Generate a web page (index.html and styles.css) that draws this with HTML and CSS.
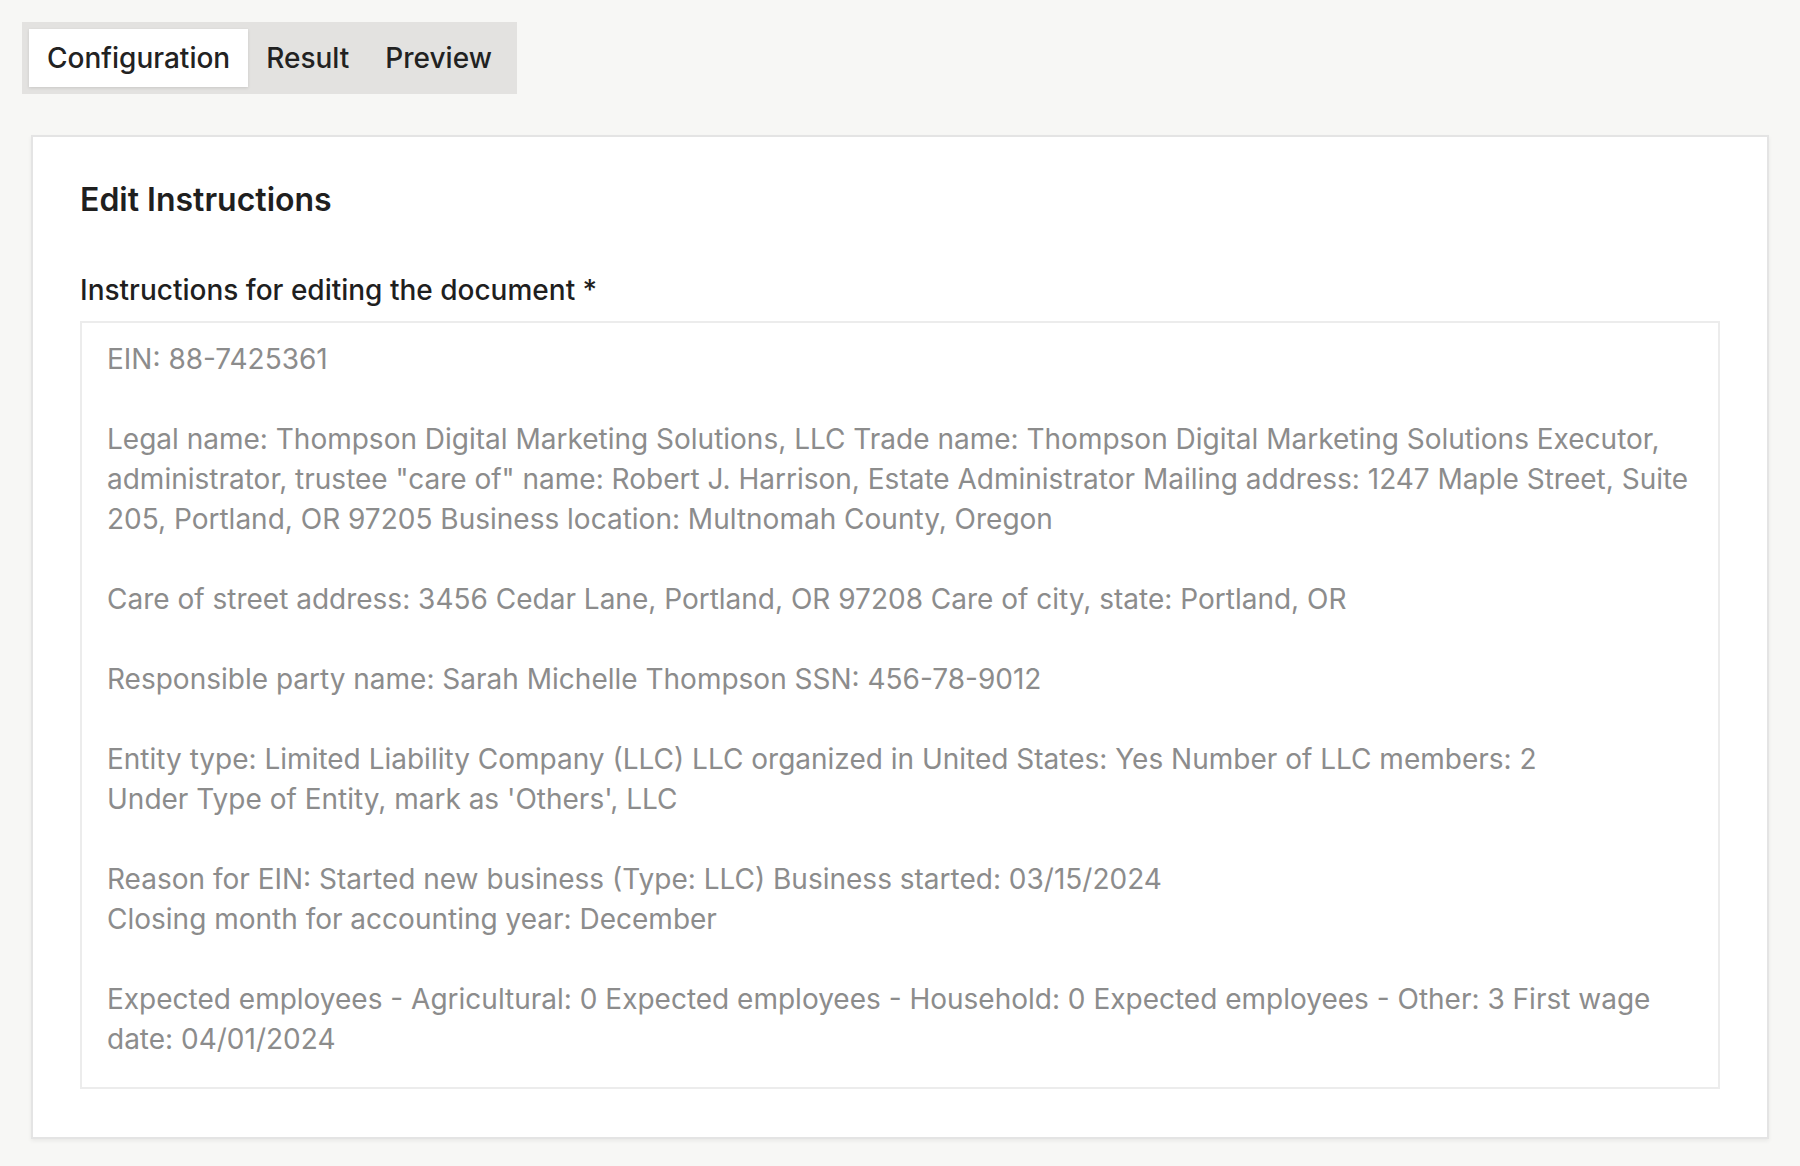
FILE: index.html
```html
<!DOCTYPE html>
<html lang="en">
<head>
<meta charset="utf-8">
<title>Edit Instructions</title>
<link rel="stylesheet" href="styles.css">
</head>
<body>
<div class="page">
  <div class="tabs">
    <button class="tab active">Configuration</button>
    <button class="tab">Result</button>
    <button class="tab">Preview</button>
  </div>
  <section class="card">
    <h2 class="title">Edit Instructions</h2>
    <label class="label" for="instr">Instructions for editing the document *</label>
    <textarea id="instr" class="input">EIN: 88-7425361

Legal name: Thompson Digital Marketing Solutions, LLC Trade name: Thompson Digital Marketing Solutions Executor, administrator, trustee "care of" name: Robert J. Harrison, Estate Administrator Mailing address: 1247 Maple Street, Suite 205, Portland, OR 97205 Business location: Multnomah County, Oregon

Care of street address: 3456 Cedar Lane, Portland, OR 97208 Care of city, state: Portland, OR

Responsible party name: Sarah Michelle Thompson SSN: 456-78-9012

Entity type: Limited Liability Company (LLC) LLC organized in United States: Yes Number of LLC members: 2
Under Type of Entity, mark as 'Others', LLC

Reason for EIN: Started new business (Type: LLC) Business started: 03/15/2024
Closing month for accounting year: December

Expected employees - Agricultural: 0 Expected employees - Household: 0 Expected employees - Other: 3 First wage date: 04/01/2024</textarea>
  </section>
</div>
</body>
</html>
```

FILE: styles.css
```css
* { box-sizing: border-box; }
html, body {
  margin: 0;
  padding: 0;
  background: #f7f7f5;
  font-family: Inter, "Noto Sans", "Liberation Sans", sans-serif;
  color: #1f1f1f;
}
.page {
  padding: 22px;
}
.tabs {
  display: inline-flex;
  background: #e3e2e0;
  padding: 7px;
  gap: 0;
}
.tab {
  font-family: inherit;
  font-size: 28px;
  font-weight: 500;
  color: #222;
  background: transparent;
  border: none;
  height: 58px;
  padding: 0 18px;
  cursor: pointer;
}
.tab.active {
  background: #ffffff;
  box-shadow: 0 1px 3px rgba(0,0,0,0.12);
}
.card {
  margin: 41px 9px 0;
  background: #fff;
  border: 2px solid #e4e4e4;
  box-shadow: 0 2px 4px rgba(0,0,0,0.06);
  padding: 43px 47px 48px;
  display: flex;
  flex-direction: column;
}
.title {
  margin: 0 0 53px;
  font-size: 32px;
  font-weight: 600;
  line-height: 40px;
  color: #1f1f1f;
}
.label {
  font-size: 28px;
  font-weight: 500;
  line-height: 34px;
  margin-bottom: 14px;
  color: #1f1f1f;
}
.input {
  display: block;
  width: 100%;
  height: 768px;
  border: 2px solid #ececec;
  padding: 16px 24px 27px 25px;
  font-family: inherit;
  font-size: 28px;
  line-height: 40px;
  color: #8c8c8c;
  background: #fff;
  resize: none;
  overflow: hidden;
  outline: none;
}
```
